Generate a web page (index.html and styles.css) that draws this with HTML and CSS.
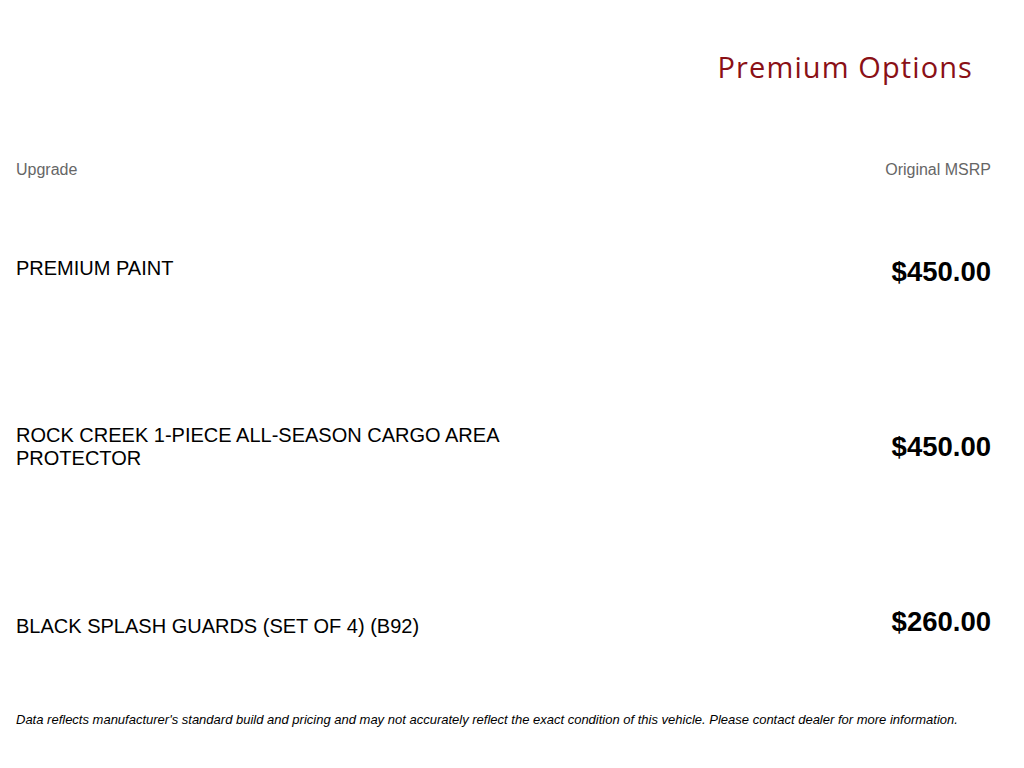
FILE: index.html
```html
<!DOCTYPE html>
<html>
<head>
<meta charset="utf-8">
<link rel="stylesheet" href="styles.css">
</head>
<body>
<div class="page">
  <h1 class="title">Premium Options</h1>
  <div class="head-row">
    <span>Upgrade</span>
    <span>Original MSRP</span>
  </div>
  <div class="rows">
    <div class="row">
      <div class="name name-up">PREMIUM PAINT</div>
      <div class="price">$450.00</div>
    </div>
    <div class="row">
      <div class="name">ROCK CREEK 1-PIECE ALL-SEASON CARGO AREA PROTECTOR</div>
      <div class="price">$450.00</div>
    </div>
    <div class="row">
      <div class="name name-down">BLACK SPLASH GUARDS (SET OF 4) (B92)</div>
      <div class="price">$260.00</div>
    </div>
  </div>
  <p class="note">Data reflects manufacturer's standard build and pricing and may not accurately reflect the exact condition of this vehicle. Please contact dealer for more information.</p>
</div>
</body>
</html>
```
FILE: styles.css
```css
html, body {
  margin: 0;
  padding: 0;
  background: #fff;
}
.page {
  padding: 0 33px 0 16px;
  font-family: "Liberation Sans", Arial, sans-serif;
  color: #000;
}
.title {
  margin: 49px 18px 0 0;
  text-align: right;
  font-family: "Open Sans", "Lato", sans-serif;
  font-weight: 400;
  font-size: 29px;
  line-height: 36px;
  color: #8a1016;
  letter-spacing: 1.1px;
}
.head-row {
  display: flex;
  justify-content: space-between;
  margin-top: 75px;
  font-size: 16px;
  line-height: 20px;
  color: #666;
}
.rows {
  margin-top: 4px;
}
.row {
  display: flex;
  justify-content: space-between;
  align-items: center;
  height: 175px;
}
.name {
  flex: 0 0 50%;
  font-size: 20px;
  line-height: 23px;
}
.name-up {
  margin-bottom: 6px;
}
.name-down {
  margin-top: 10px;
}
.price {
  font-size: 27.5px;
  font-weight: 700;
  line-height: 32px;
}
.note {
  margin: 3px 0 0;
  font-size: 13px;
  line-height: 15px;
  font-style: italic;
}
```
